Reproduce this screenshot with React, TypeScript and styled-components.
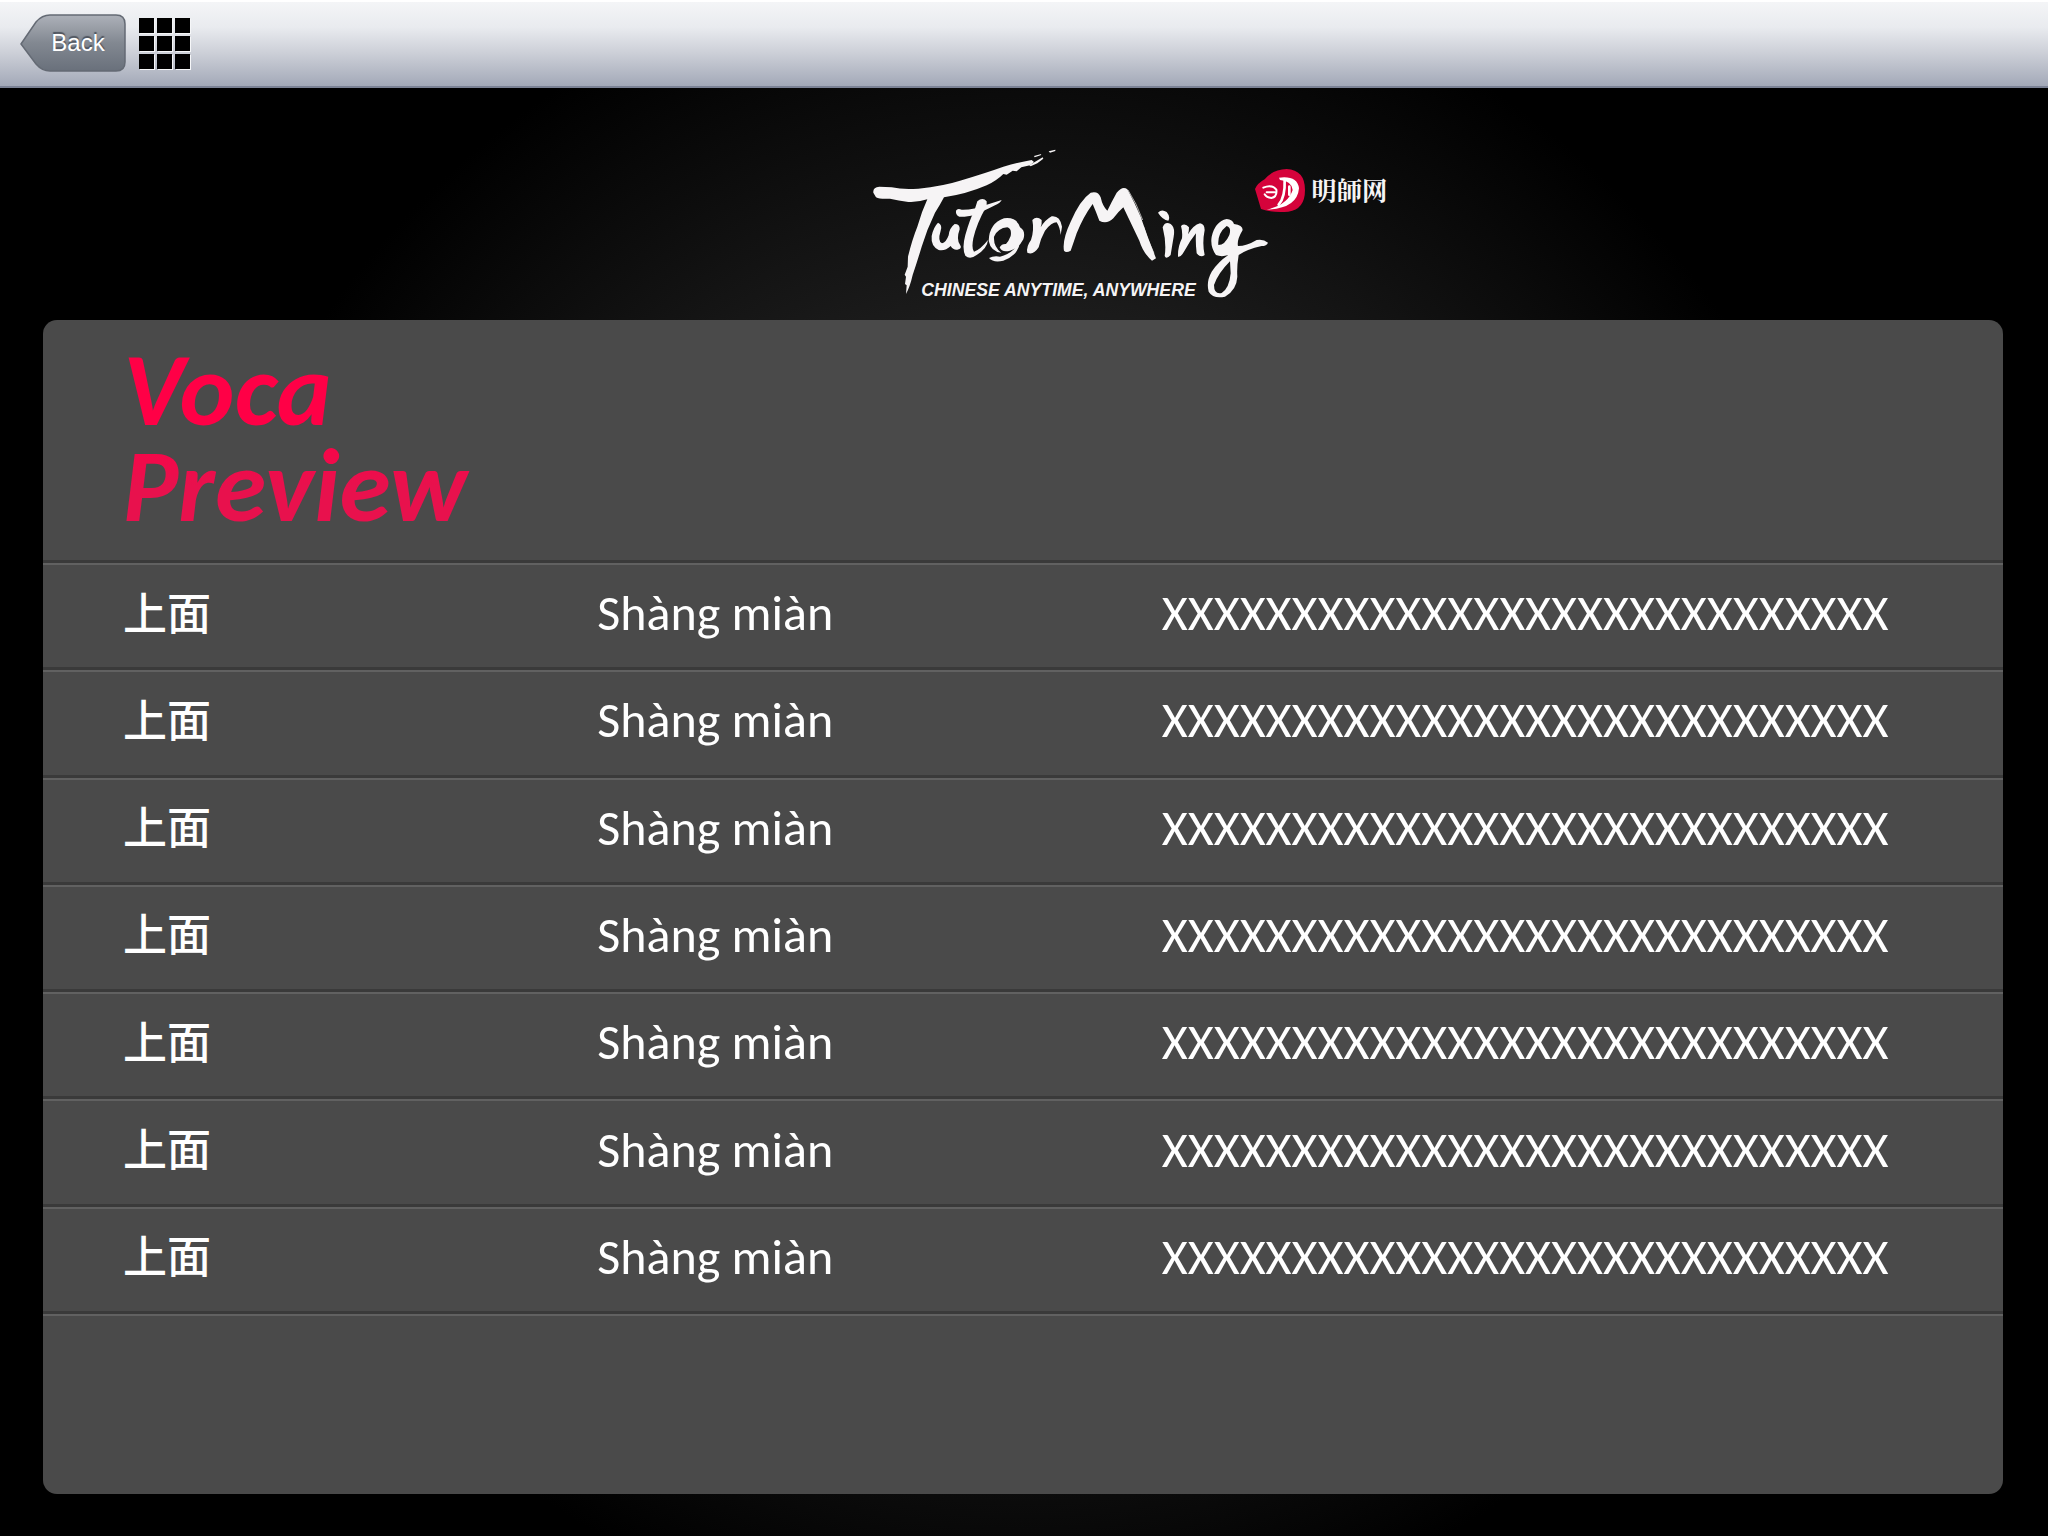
import React from "react";
import styled, { createGlobalStyle } from "styled-components";

const GlobalStyle = createGlobalStyle`
  * { box-sizing: border-box; }
  body { margin: 0; background: #000; }
`;

const Page = styled.div`
  min-height: 100vh;
  display: flex;
  flex-direction: column;
  background: #000 radial-gradient(circle 850px at 50% 52%, #404040, #000);
  color: #fff;
  font-family: Carlito, "Open Sans", sans-serif;
`;

const Toolbar = styled.nav`
  height: 88px;
  display: flex;
  align-items: center;
  gap: 13px;
  padding: 0 20px 2px;
  border-top: 2px solid #fff;
  border-bottom: 2px solid #7b8295;
  background: linear-gradient(#f4f5f7, #e9ebef 30%, #cdd0d8 60%, #a3a9b8);
`;

const BackButton = styled.button`
  position: relative;
  width: 106px;
  height: 58px;
  padding: 0 0 0 10px;
  border: 0;
  background: none;
  color: #fff;
  font: 24px "Liberation Sans", sans-serif;
  text-shadow: 0 -2px 1px #4c525c;
  cursor: pointer;
`;

const BackShape = styled.svg`
  position: absolute;
  inset: 0;
`;

const BackLabel = styled.span`
  position: relative;
`;

const GridButton = styled.button`
  display: grid;
  grid-template-columns: repeat(3, 15px);
  grid-auto-rows: 15px;
  gap: 3px;
  padding: 0;
  border: 0;
  background: none;
  cursor: pointer;
`;

const GridCell = styled.span`
  background: #000;
  box-shadow: 1px 1px 0 #f6f7f9;
`;

const Brand = styled.header`
  padding: 52px 0 10px 42%;
`;

const Logo = styled.svg`
  display: block;
  width: 540px;
  height: 170px;
  fill: #f6f4f5;
`;

const Tagline = styled.text`
  font: italic bold 53px "Liberation Sans", sans-serif;
`;

const BrandName = styled.text`
  font: bold 76px "Noto Serif CJK SC", "Noto Sans CJK SC", sans-serif;
`;

const Panel = styled.main`
  flex: 1;
  margin: 0 45px 42px 43px;
  border-radius: 14px;
  background: #4a4a4a;
`;

const Title = styled.h1`
  margin: 0;
  height: 245px;
  padding: 22px 80px;
  background: linear-gradient(#3a3a3a 3px, #616161 3px) bottom / 100% 5px no-repeat;
  font: italic bold 104px/96px Carlito, Lato, sans-serif;
`;

const TitleText = styled.span`
  display: inline-block;
  padding-right: 12px;
  background: linear-gradient(#ff0046 45%, #e8114d 75%);
  background-clip: text;
  color: transparent;
`;

const WordTable = styled.table`
  width: 100%;
  height: 751px;
  table-layout: fixed;
  border-collapse: collapse;
`;

const WordRow = styled.tr`
  background: linear-gradient(#3a3a3a 3px, #616161 3px) bottom / 100% 5px no-repeat;
`;

const Cell = styled.td<{ $width?: string }>`
  width: ${(p) => p.$width ?? "auto"};
  padding: 0 0 11px 80px;
  font-size: 50px;
  line-height: 60px;
  white-space: nowrap;
`;

const HanziCell = styled(Cell)`
  padding-bottom: 16px;
  font-family: "Noto Sans CJK SC", sans-serif;
  font-size: 44px;
  font-weight: 500;
`;

const words = Array.from({ length: 7 }, () => ({
  hanzi: "上面",
  pinyin: "Shàng miàn",
  meaning: "X".repeat(28),
}));

function TutorMingLogo() {
  return (
    <Logo viewBox="0 0 1620 510" role="img" aria-label="TutorMing">
      <path d="M40 158Q38 142 58 140L95 142Q130 150 175 146Q250 138 300 122Q380 98 430 80Q480 66 515 60L522 66L510 76L484 82L470 94L458 92L440 104L430 102Q410 122 380 136Q320 162 252 172Q240 195 225 218Q200 270 185 320Q170 370 158 405Q150 440 138 462L140 436L135 432L138 410L134 404L143 380L144 350Q156 300 172 260Q185 215 202 178Q170 188 145 186Q115 182 90 176Q60 178 48 172Z" />
      <path d="M508 76L528 64L548 52L550 56L532 70L512 79ZM522 48L544 42L542 46L524 52ZM566 34L586 29L586 33L570 38Z" />
      <path d="M234 248Q248 254 242 272Q232 304 246 310Q258 308 266 286Q268 264 284 252Q300 252 299 268Q288 298 300 314Q308 326 292 329Q280 331 272 318Q256 334 236 330Q212 318 215 288Q220 262 234 248Z" />
      <path d="M288 212Q292 204 305 209Q340 210 380 194L425 180Q422 188 405 196Q370 214 345 224Q315 232 298 230Q286 224 288 212Z" />
      <path d="M352 184Q368 170 380 184L380 198Q350 250 340 295Q334 325 342 335Q360 330 384 300Q382 325 350 345Q330 360 316 347Q305 325 316 285Q330 235 342 215Z" />
      <path fillRule="evenodd" d="M386 302Q388 250 432 235Q470 230 480 262Q498 273 490 298Q478 324 450 332Q425 338 419 322Q425 311 438 312Q446 304 452 288Q456 266 442 262Q414 264 402 290Q400 320 424 338Q392 334 386 302Z" />
      <path d="M387 354Q400 347 420 350Q455 343 480 306Q476 345 430 362Q400 369 387 354Z" />
      <path d="M517 240Q530 226 545 240Q546 255 542 262Q555 240 575 229Q600 226 606 260L602 285Q600 262 590 247Q575 247 555 272Q542 295 536 322Q520 347 502 338Q498 320 513 300Q523 270 517 240Z" />
      <path d="M612 332Q606 300 632 245Q660 180 692 158Q715 152 722 172Q728 200 742 212Q755 185 770 158Q788 136 802 148Q825 190 842 230Q862 290 888 355L876 362Q850 340 838 302L790 202Q775 215 760 235Q740 254 718 242Q708 215 698 192Q670 230 650 280Q640 310 632 332Q618 340 612 332Z" />
      <path d="M804 150Q830 190 848 240M850 258Q862 300 882 340" fill="none" stroke="#f6f4f5" strokeWidth="2" />
      <path d="M894 218Q905 206 920 216Q932 230 925 242Q908 240 894 218ZM908 262Q915 243 932 252Q946 262 941 290Q935 325 932 345Q918 360 914 348Q920 310 908 262Z" />
      <path d="M963 258Q975 248 987 262Q987 275 984 283Q1000 255 1020 250Q1034 252 1034 270Q1026 310 1034 345Q1022 355 1010 340Q1006 305 1008 280Q990 302 975 330Q962 354 954 350Q953 320 966 295Q968 275 963 258Z" />
      <path fillRule="evenodd" d="M1068 345Q1050 320 1055 290Q1065 245 1100 237Q1118 238 1122 252Q1148 255 1148 270Q1130 300 1134 318Q1160 318 1190 300Q1210 296 1224 308Q1220 318 1205 318Q1160 328 1136 345Q1130 380 1132 410Q1130 450 1095 470Q1060 478 1046 455Q1038 425 1055 395Q1075 365 1105 345Q1085 352 1068 345ZM1075 315Q1072 280 1100 258Q1115 262 1108 285Q1095 315 1075 315ZM1110 364Q1074 400 1062 435Q1062 464 1085 459Q1108 445 1112 400Z" />
      <path fill="#d5033b" d="M1185 147Q1192 130 1214 118Q1238 88 1280 87Q1335 90 1335 150Q1335 208 1285 215Q1235 219 1203 207Q1195 180 1185 147Z" />
      <path fill="#fff" d="M1257 113Q1312 106 1317 145Q1312 206 1220 209Q1284 194 1298 150Q1296 124 1260 120Z" />
      <g fill="none" stroke="#fff" strokeLinecap="round" strokeWidth="8">
        <path d="M1210 143Q1236 132 1249 149Q1252 170 1234 174Q1220 173 1214 163M1220 157H1244" strokeWidth="6" />
        <path d="M1274 120Q1276 172 1256 194M1288 140V164" />
      </g>
      <Tagline x="184" y="467">CHINESE ANYTIME, ANYWHERE</Tagline>
      <BrandName x="1354" y="180">明師网</BrandName>
    </Logo>
  );
}

export default function App() {
  return (
    <Page>
      <GlobalStyle />
      <Toolbar>
        <BackButton>
          <BackShape viewBox="0 0 106 58" aria-hidden="true">
            <defs>
              <linearGradient id="steel" x1="0" y1="0" x2="0" y2="1">
                <stop offset="0" stopColor="#adb1b9" />
                <stop offset="0.5" stopColor="#828891" />
                <stop offset="1" stopColor="#69707b" />
              </linearGradient>
            </defs>
            <path
              d="M1 30L16 8Q22 1 30 1H96Q105 1 105 10V48Q105 57 96 57H30Q22 57 16 50Z"
              fill="url(#steel)"
              stroke="#646a74"
              strokeWidth="1.5"
            />
          </BackShape>
          <BackLabel>Back</BackLabel>
        </BackButton>
        <GridButton aria-label="Grid">
          {Array.from({ length: 9 }, (_, i) => (
            <GridCell key={i} />
          ))}
        </GridButton>
      </Toolbar>
      <Brand>
        <TutorMingLogo />
      </Brand>
      <Panel>
        <Title>
          <TitleText>
            Voca
            <br />
            Preview
          </TitleText>
        </Title>
        <WordTable>
          <tbody>
            {words.map((word, i) => (
              <WordRow key={i}>
                <HanziCell $width="24.2%">{word.hanzi}</HanziCell>
                <Cell $width="28.8%">{word.pinyin}</Cell>
                <Cell>{word.meaning}</Cell>
              </WordRow>
            ))}
          </tbody>
        </WordTable>
      </Panel>
    </Page>
  );
}
